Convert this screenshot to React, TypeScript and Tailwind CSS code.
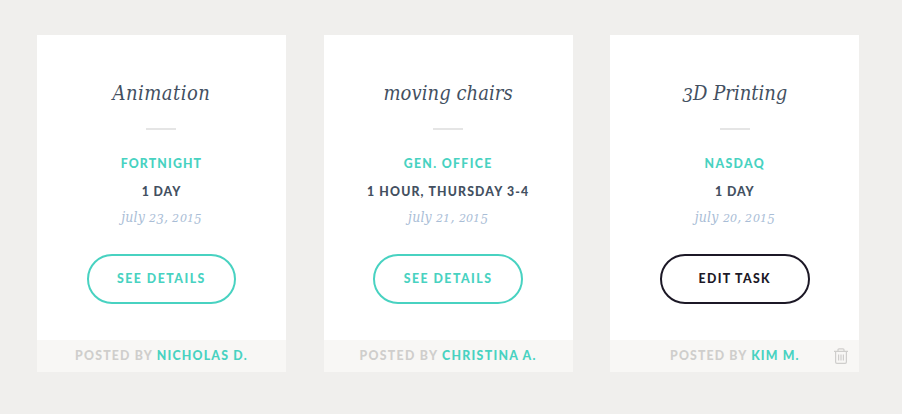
type Task = {
  title: string;
  titleClass: string;
  place: string;
  placeClass: string;
  duration: string;
  durationClass: string;
  date: string;
  action: string;
  actionClass: string;
  author: string;
  footerClass: string;
  editable?: boolean;
};

const tasks: Task[] = [
  {
    title: "Animation",
    titleClass: "tracking-[0.5px]",
    place: "FORTNIGHT",
    placeClass: "tracking-[1.15px]",
    duration: "1 DAY",
    durationClass: "tracking-[0.9px]",
    date: "july 23, 2015",
    action: "SEE DETAILS",
    actionClass: "border-[#48d2c1] text-[#48d2c1] tracking-[1.5px]",
    author: "NICHOLAS D.",
    footerClass: "tracking-[1.22px]",
  },
  {
    title: "moving chairs",
    titleClass: "tracking-[0.05px]",
    place: "GEN. OFFICE",
    placeClass: "tracking-[1.35px]",
    duration: "1 HOUR, THURSDAY 3-4",
    durationClass: "tracking-[1.16px]",
    date: "july 21, 2015",
    action: "SEE DETAILS",
    actionClass: "border-[#48d2c1] text-[#48d2c1] tracking-[1.5px]",
    author: "CHRISTINA A.",
    footerClass: "tracking-[1.3px]",
  },
  {
    title: "3D Printing",
    titleClass: "tracking-[0px]",
    place: "NASDAQ",
    placeClass: "tracking-[1.35px]",
    duration: "1 DAY",
    durationClass: "tracking-[0.9px]",
    date: "july 20, 2015",
    action: "EDIT TASK",
    actionClass: "border-[#1c1826] text-[#1c1826] tracking-[1.35px]",
    author: "KIM M.",
    footerClass: "tracking-[1.15px]",
    editable: true,
  },
];

// Old-style figures: 0-2 sit at x-height, 3-9 drop below the baseline.
function OldStyle({ text }: { text: string }) {
  return (
    <>
      {text.split(/(\d)/).map((part, i) => {
        if (/^[012]$/.test(part)) {
          return (
            <span key={i} className="mr-[0.06em] inline-block origin-bottom-left scale-x-110 text-[0.8em] leading-none">
              {part}
            </span>
          );
        }
        if (/^[3-9]$/.test(part)) {
          return (
            <span key={i} className="relative top-[0.13em] text-[0.94em] leading-none">
              {part}
            </span>
          );
        }
        return <span key={i}>{part}</span>;
      })}
    </>
  );
}

function TrashIcon() {
  return (
    <svg
      viewBox="0 0 14 16"
      className="absolute top-2 right-[11px] h-4 w-3.5"
      fill="none"
      stroke="#cfcecc"
      strokeWidth="1.2"
    >
      <path d="M0 3.3h14M4 3V1.8Q4 .9 5 .9h4q1 0 1 .9V3M1.6 3v11q0 1.3 1.3 1.3h8.2q1.3 0 1.3-1.3V3M4.6 6.5v6M7 6.5v6M9.4 6.5v6" />
    </svg>
  );
}

function Card({ task }: { task: Task }) {
  return (
    <article className="flex h-[337px] w-[248.9px] flex-col items-center bg-white font-['Lato',sans-serif] text-[12.3px] leading-4 font-black whitespace-nowrap">
      <h2
        className={`mt-[42px] h-8 font-['DejaVu_Serif_Condensed','DejaVu_Serif',serif] text-[20px] leading-8 font-normal text-[#435061] italic [font-stretch:condensed] ${task.titleClass}`}
      >
        <OldStyle text={task.title} />
      </h2>
      <div className="mt-[19px] h-0.5 w-[30px] bg-[#e5e5e5]" />
      <p className={`mt-[26px] text-[#48d2c1] ${task.placeClass}`}>{task.place}</p>
      <p className={`mt-3 text-[#435061] ${task.durationClass}`}>{task.duration}</p>
      <p className="mt-[7px] h-5 font-['DejaVu_Serif_Condensed','DejaVu_Serif',serif] text-[14px] leading-5 font-normal tracking-[0.15px] text-[#a9bdd6] italic [font-stretch:condensed]">
        <OldStyle text={task.date} />
      </p>
      <button
        className={`mt-[27px] h-[50px] w-[149.4px] rounded-full border-2 ${task.actionClass}`}
      >
        {task.action}
      </button>
      <footer
        className={`relative mt-auto h-8 w-full bg-[#f8f7f5] text-center leading-8 text-[#cfcecc] ${task.footerClass}`}
      >
        POSTED BY <span className="text-[#48d2c1]">{task.author}</span>
        {task.editable && <TrashIcon />}
      </footer>
    </article>
  );
}

export default function App() {
  return (
    <main className="flex h-[414px] w-[902px] gap-[37.8px] bg-[#f0efed] pt-[35px] pl-[37px]">
      {tasks.map((task) => (
        <Card key={task.title} task={task} />
      ))}
    </main>
  );
}
